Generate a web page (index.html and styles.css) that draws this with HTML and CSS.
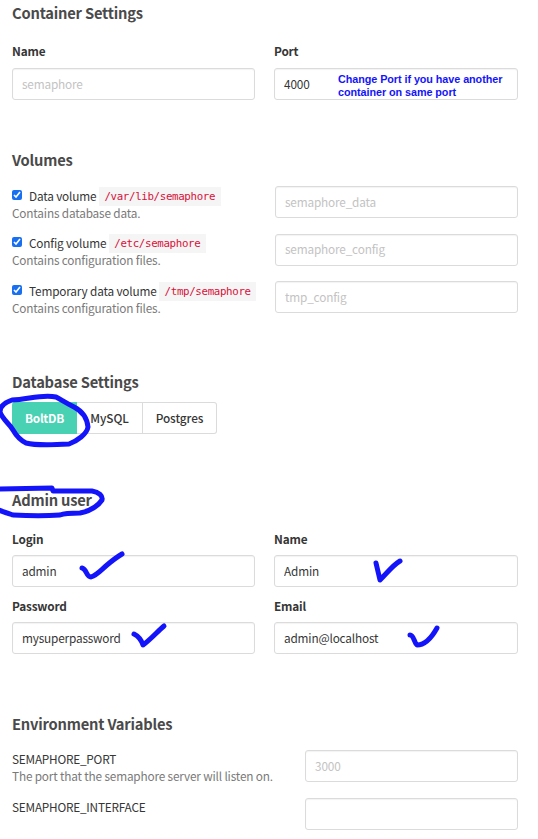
FILE: index.html
```html
<!DOCTYPE html>
<html lang="en">
<head>
<meta charset="utf-8">
<title>Semaphore</title>
<link rel="stylesheet" href="styles.css">
</head>
<body>
<main class="page">
  <section class="container-settings">
    <h2>Container Settings</h2>
    <div class="pair">
      <label class="field"><span>Name</span><input type="text" placeholder="semaphore"></label>
      <label class="field"><span>Port</span><input type="text" value="4000"></label>
    </div>
  </section>

  <section class="volumes">
    <h2>Volumes</h2>
    <div class="row">
      <div class="info">
        <label class="option"><input type="checkbox" checked><span>Data volume</span><code>/var/lib/semaphore</code></label>
        <p>Contains database data.</p>
      </div>
      <input type="text" placeholder="semaphore_data">
    </div>
    <div class="row">
      <div class="info">
        <label class="option"><input type="checkbox" checked><span>Config volume</span><code>/etc/semaphore</code></label>
        <p>Contains configuration files.</p>
      </div>
      <input type="text" placeholder="semaphore_config">
    </div>
    <div class="row">
      <div class="info">
        <label class="option"><input type="checkbox" checked><span>Temporary data volume</span><code>/tmp/semaphore</code></label>
        <p>Contains configuration files.</p>
      </div>
      <input type="text" placeholder="tmp_config">
    </div>
  </section>

  <section class="database">
    <h2>Database Settings</h2>
    <div class="buttons">
      <button class="active">BoltDB</button><button>MySQL</button><button>Postgres</button>
    </div>
  </section>

  <section class="admin">
    <h2>Admin user</h2>
    <div class="pair">
      <label class="field"><span>Login</span><input type="text" value="admin"></label>
      <label class="field"><span>Name</span><input type="text" value="Admin"></label>
      <label class="field"><span>Password</span><input type="text" value="mysuperpassword"></label>
      <label class="field"><span>Email</span><input type="text" value="admin@localhost"></label>
    </div>
  </section>

  <section class="env">
    <h2>Environment Variables</h2>
    <div class="row">
      <div class="info"><div class="var">SEMAPHORE_PORT</div><p>The port that the semaphore server will listen on.</p></div>
      <input type="text" placeholder="3000">
    </div>
    <div class="row">
      <div class="info"><div class="var">SEMAPHORE_INTERFACE</div></div>
      <input type="text">
    </div>
  </section>

  <p class="note">Change Port if you have another<br>container on same port</p>
  <svg class="ink" width="538" height="839" viewBox="0 0 538 839">
    <path d="M56 397 C43 394 29 399 12 400 C3 403 0 407 0 412 C2 419 9 423 13 430 C17 437 20 440 26 443 C37 446 53 445 69 444 C77 441 87 434 88 427 C87 418 82 411 74 407 C66 403 60 399 56 397"/>
    <path d="M-4 489 L52 488 L53 491 L92 491 C99 492 103 496 102 500 C98 506 90 511 80 513 C70 513 65 513 60 515 C45 516 33 516 13 515 C7 513 1 511 -4 509"/>
    <path d="M82 568 C87 569 86 577 91 577 C97 575 101 570 107 565 C113 560 117 557 122 554"/>
    <path d="M134 634 C138 636 141 639 143 645 C150 640 158 631 164 626"/>
    <path d="M376 563 L380 580 C387 573 393 565 400 561"/>
    <path d="M410 635 C414 635 414 643 417 645 C425 645 432 637 437 628"/>
  </svg>
</main>
</body>
</html>
```
FILE: styles.css
```css
* { box-sizing: border-box; }
body {
  margin: 0;
  background: #fff;
  color: #363636;
  font-family: "Noto Sans CJK SC", sans-serif;
  font-size: 11.8px;
  letter-spacing: -0.17px;
}
.page {
  position: relative;
  width: 538px;
  height: 839px;
  padding: 3px 20px 0 12px;
  overflow: hidden;
}
h2 {
  margin: 0;
  height: 20px;
  line-height: 20px;
  font-size: 14.7px;
  letter-spacing: -0.2px;
  font-weight: 700;
  color: #4a4a4a;
}
p { margin: 0; }
.container-settings { height: 147px; }
.volumes { height: 222px; }
.database { height: 118px; }
.admin { height: 224px; }
.pair {
  display: grid;
  grid-template-columns: 243px 244px;
  column-gap: 19px;
  row-gap: 11px;
}
.container-settings .pair { margin-top: 20px; }
.admin .pair { margin-top: 21px; }
.field { display: flex; flex-direction: column; }
.field span {
  height: 16px;
  margin-bottom: 9px;
  line-height: 16px;
  font-weight: 700;
}
.admin .field span { margin-bottom: 8px; }
.admin .field { height: 56px; }
input[type="text"] {
  width: 100%;
  height: 32px;
  padding: 0 9px 2px;
  border: 1px solid #dbdbdb;
  border-radius: 3px;
  background: #fff;
  box-shadow: inset 0 1px 1px rgba(10, 10, 10, .05);
  color: #363636;
  font: inherit;
  letter-spacing: inherit;
}
input::placeholder { color: #c3c3c3; opacity: 1; }
.row {
  display: grid;
  grid-template-columns: 1fr 243px;
  height: 47.5px;
}
.volumes .row:first-of-type { margin-top: 16px; }
.option {
  display: flex;
  align-items: center;
  height: 19px;
  line-height: 19px;
  white-space: nowrap;
}
.option span { margin-top: -1px; }
.option input { width: 10px; height: 10px; margin: 0 7px 2px 0; accent-color: #1870f0; }
code {
  height: 19px;
  margin: 1px 0 0 2.5px;
  padding: 0 5.5px;
  background: #f5f5f5;
  color: #da1039;
  font: 10.8px/19px "DejaVu Sans Mono", monospace;
  letter-spacing: -0.35px;
}
.info p { height: 16px; line-height: 16px; margin-top: -0.5px; color: #7a7a7a; white-space: nowrap; }
.env .info p { margin-top: -1px; }
.buttons { display: flex; height: 32px; margin-top: 10px; }
button {
  height: 32px;
  padding: 0 0 2px;
  width: 66px;
  border: 1px solid #dbdbdb;
  border-left: 0;
  background: #fff;
  color: #363636;
  font: inherit;
  font-weight: 500;
  letter-spacing: -0.1px;
}
.active { width: 65px; background: #48d1b2; border-color: #48d1b2; color: #fff; border-radius: 3px 0 0 3px; font-weight: 700; letter-spacing: -0.3px; padding-left: 1px; }
button:last-child { width: 74px; border-radius: 0 3px 3px 0; }
.env .row { grid-template-columns: 1fr 213px; height: 48px; }
.env .row:first-of-type { margin-top: 16px; }
.var { height: 19px; line-height: 18px; letter-spacing: -0.22px; }
.note {
  position: absolute;
  left: 338px;
  top: 73px;
  color: #1414fa;
  font: bold 10.8px/13px "Liberation Sans", sans-serif;
  letter-spacing: -0.06px;
  white-space: nowrap;
}
.ink {
  position: absolute;
  left: 0;
  top: 0;
  pointer-events: none;
  fill: none;
  stroke: #1414fa;
  stroke-width: 5;
  stroke-linecap: round;
  stroke-linejoin: round;
}
```
